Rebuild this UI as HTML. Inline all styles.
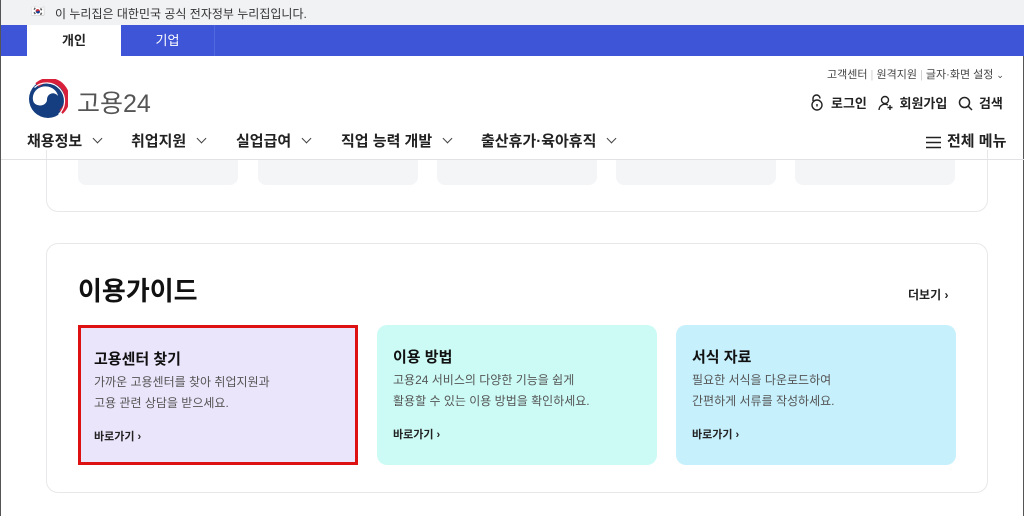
<!DOCTYPE html>
<html><head><meta charset="utf-8"><style>
*{margin:0;padding:0;box-sizing:border-box}
body{width:1024px;height:516px;overflow:hidden;background:#fff;font-family:"Liberation Sans","Noto Sans CJK KR",sans-serif;color:#111;position:relative;border-left:1px solid #555;border-right:1px solid #555}
.abs{position:absolute}
.top{left:0;top:0;width:1024px;height:25px;background:#f1f2f4;font-size:12px;color:#333}
.blue{left:0;top:25px;width:1024px;height:31px;background:#3d55d6}
.tab{top:25px;height:31px;font-size:13px;text-align:center;line-height:31px}
.nav{top:130px;font-size:15px;font-weight:bold;color:#222;z-index:5}
.chev{display:inline-block;width:7px;height:7px;border-right:1.5px solid #444;border-bottom:1.5px solid #444;transform:rotate(45deg);margin-left:12px;position:relative;top:-4px}
.box{border:1px solid #e8e8ea;border-radius:12px;background:#fff}
.tile{background:#f4f5f7;border-radius:0 0 8px 8px;width:160px}
.card{top:325px;height:140px;width:280px;border-radius:10px;padding:20px 0 0 16px}
.card h3{font-size:15px;font-weight:bold;color:#111;margin-top:1px}
.card p{font-size:12px;color:#555;line-height:21px;margin-top:3px}
.card .go{font-size:11px;font-weight:bold;margin-top:14px;color:#222}
.ic{display:inline-block;vertical-align:-3px;margin-right:6px}
</style></head><body>
<div class="abs top"><span class="abs" style="left:30px;top:5px;font-size:11px">🇰🇷</span><span class="abs" style="left:54px;top:5px">이 누리집은 대한민국 공식 전자정부 누리집입니다.</span></div>
<div class="abs blue"></div>
<div class="abs tab" style="left:26px;width:94px;background:#fff;color:#222;font-weight:bold">개인</div>
<div class="abs tab" style="left:120px;width:94px;color:#fff;border-right:1px solid #5068e0">기업</div>
<svg class="abs" style="left:27px;top:79px" width="40" height="40" viewBox="0 0 40 40" fill="none">
<circle cx="20" cy="20" r="19" fill="#143e7f"/>
<path d="M5 21 A12 11 0 0 1 30 17 A6 6 0 0 0 19 20 A7 6 0 0 1 5 21Z" fill="#fff"/>
<path d="M9 6 A18 18 0 0 1 33 33" stroke="#d8203a" stroke-width="5"/>
<path d="M9 6 A18 18 0 0 1 33 33" stroke="#fff" stroke-width="1.2" transform="translate(-2.5 2.5) scale(1)"/>
</svg>
<div class="abs" style="left:76px;top:84px;font-size:25px;color:#555">고용24</div>
<div class="abs" style="left:826px;top:66px;font-size:11px;color:#444">고객센터 <span style="color:#ccc">|</span> 원격지원 <span style="color:#ccc">|</span> 글자·화면 설정 <span style="font-size:9px">⌄</span></div>
<div class="abs" style="left:808px;top:93px;font-size:13px;font-weight:bold;color:#222">
<svg class="ic" width="16" height="17" viewBox="0 0 16 17" fill="none" stroke="#222" stroke-width="1.4"><path d="M4 7V4.5a3.5 3.5 0 0 1 7 0"/><circle cx="8" cy="11" r="5"/><path d="M8 10v2.5"/></svg>로그인
<span style="margin-left:7px"></span><svg class="ic" width="16" height="16" viewBox="0 0 16 16" fill="none" stroke="#222" stroke-width="1.4"><circle cx="7" cy="5" r="3.5"/><path d="M1 15a6 6 0 0 1 9-5M12 10v5M9.5 12.5h5"/></svg>회원가입
<span style="margin-left:7px"></span><svg class="ic" width="15" height="15" viewBox="0 0 15 15" fill="none" stroke="#222" stroke-width="1.5"><circle cx="6.5" cy="6.5" r="5"/><path d="M10 10l4 4"/></svg>검색</div>
<div class="abs nav" style="left:26px">채용정보<span class="chev"></span></div>
<div class="abs nav" style="left:130px">취업지원<span class="chev"></span></div>
<div class="abs nav" style="left:235px">실업급여<span class="chev"></span></div>
<div class="abs nav" style="left:340px">직업 능력 개발<span class="chev"></span></div>
<div class="abs nav" style="left:480px">출산휴가·육아휴직<span class="chev"></span></div>
<div class="abs nav" style="left:925px">
<svg class="ic" width="15" height="13" viewBox="0 0 15 13" stroke="#222" stroke-width="1.6"><path d="M0 1.5h15M0 6.5h15M0 11.5h15"/></svg>전체 메뉴</div>
<div class="abs box" style="left:45px;top:150px;width:942px;height:62px;border-top:none;border-radius:0 0 12px 12px"></div>
<div class="abs" style="left:0;top:159px;width:1024px;height:1px;background:#e2e2e4"></div>
<div class="abs tile" style="left:77px;top:160px;height:25px"></div>
<div class="abs tile" style="left:257px;top:160px;height:25px"></div>
<div class="abs tile" style="left:436px;top:160px;height:25px"></div>
<div class="abs tile" style="left:615px;top:160px;height:25px"></div>
<div class="abs tile" style="left:794px;top:160px;height:25px"></div>
<div class="abs box" style="left:45px;top:243px;width:942px;height:250px"></div>
<div class="abs" style="left:77px;top:271px;font-size:26px;font-weight:bold;color:#111">이용가이드</div>
<div class="abs" style="left:907px;top:286px;font-size:12px;font-weight:bold;color:#222">더보기 ›</div>
<div class="abs card" style="left:77px;background:#ebe5fb;border:3px solid #dd1111;border-radius:0;padding:19px 0 0 13px"><h3>고용센터 찾기</h3><p>가까운 고용센터를 찾아 취업지원과<br>고용 관련 상담을 받으세요.</p><div class="go">바로가기 ›</div></div>
<div class="abs card" style="left:376px;background:#ccfbf6"><h3>이용 방법</h3><p>고용24 서비스의 다양한 기능을 쉽게<br>활용할 수 있는 이용 방법을 확인하세요.</p><div class="go">바로가기 ›</div></div>
<div class="abs card" style="left:675px;background:#c6f0fc"><h3>서식 자료</h3><p>필요한 서식을 다운로드하여<br>간편하게 서류를 작성하세요.</p><div class="go">바로가기 ›</div></div>
</body></html>
